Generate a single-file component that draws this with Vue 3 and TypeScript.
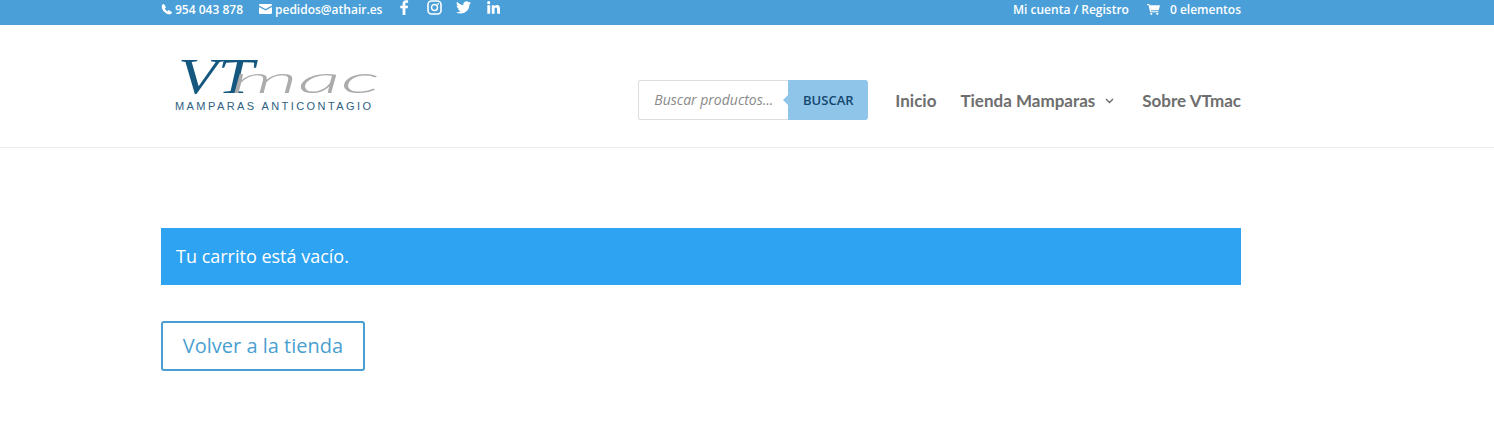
<script setup lang="ts">
const navItems: { label: string; hasMenu: boolean }[] = [
  { label: 'Inicio', hasMenu: false },
  { label: 'Tienda Mamparas', hasMenu: true },
  { label: 'Sobre VTmac', hasMenu: false },
]
</script>

<template>
  <div class="page">
    <div class="topbar">
      <div class="wrap topbar-inner">
        <div class="top-left">
          <span class="contact phone">
            <svg width="12" height="12" viewBox="0 0 24 24"><path fill="#fff" d="M6.200 2.500 9.600 8c.3.500.2 1.100-.2 1.500L7.600 11.200c1 2.200 3 4.300 5.200 5.300l1.700-1.800c.4-.4 1-.5 1.500-.2l5.500 3.400c.5.300.6.900.3 1.400-1 1.800-2.600 3.200-4.600 3.200C9.700 22.500 1.500 14.300 1.500 6.800c0-2 1.400-3.600 3.200-4.600.5-.3 1.200-.2 1.500.3z"/></svg>
            954 043 878
          </span>
          <span class="contact mail">
            <svg width="13" height="10" viewBox="0 0 13 10"><path fill="#fff" d="M0 1a1 1 0 0 1 1-1h11a1 1 0 0 1 1 1v.6L6.500 5 0 1.600z"/><path fill="#fff" d="M0 3l6.500 3.400L13 3v6a1 1 0 0 1-1 1H1a1 1 0 0 1-1-1z"/></svg>
            pedidos@athair.es
          </span>
          <span class="socials">
            <svg class="soc-f" width="9" height="15" viewBox="0 0 9 15"><path fill="#fff" d="M2.600 15V8.300H.3V5.700h2.300V3.800C2.600 1.500 4 .2 6 .2c1 0 1.800.1 2.100.1v2.400H6.700c-1.100 0-1.300.5-1.300 1.300v1.700h2.700l-.4 2.600H5.400V15z"/></svg>
            <svg class="soc-i" width="15" height="15" viewBox="0 0 15 15"><rect x="1" y="1" width="13" height="13" rx="3.500" fill="none" stroke="#fff" stroke-width="1.600"/><circle cx="7.500" cy="7.500" r="3" fill="none" stroke="#fff" stroke-width="1.500"/><circle cx="11.200" cy="3.800" r=".9" fill="#fff"/></svg>
            <svg class="soc-t" width="15" height="13" viewBox="0 0 24 20"><path fill="#fff" d="M24 2.400c-.9.400-1.800.7-2.800.8 1-.6 1.800-1.600 2.200-2.700-1 .6-2 1-3.100 1.200A4.900 4.900 0 0 0 11.900 6.200C7.800 6 4.200 4 1.700.9c-1.300 2.300-.6 5.100 1.500 6.600-.8 0-1.600-.2-2.200-.6 0 2.300 1.600 4.500 4 5-.7.200-1.500.2-2.200.1.600 2 2.400 3.400 4.600 3.400A9.900 9.900 0 0 1 0 17.400 14 14 0 0 0 7.500 19.600c9.100 0 14.300-7.700 14-14.600 1-.7 1.800-1.600 2.500-2.600z"/></svg>
            <svg class="soc-l" width="13" height="13" viewBox="0 0 13 13"><rect x=".3" y="4.200" width="2.900" height="8.500" fill="#fff"/><circle cx="1.700" cy="1.700" r="1.600" fill="#fff"/><path fill="#fff" d="M4.800 4.200h2.700v1.200c.5-.8 1.400-1.400 2.600-1.400 2.200 0 2.900 1.400 2.900 3.700v5H10.100V8.300c0-1-.2-1.900-1.200-1.900-1.100 0-1.300.9-1.300 1.900v4.400H4.800z"/></svg>
          </span>
        </div>
        <div class="top-right">
          <span class="account">Mi cuenta / Registro</span>
          <span class="cart">
            <svg width="13" height="11" viewBox="0 0 13 11"><path fill="#fff" d="M0 0h2.200l.4 1.300H13l-1.300 5H3.900l.3 1h7.300v1H3.200L1.400 1H0z"/><circle cx="4.300" cy="9.800" r="1.100" fill="#fff"/><circle cx="10.300" cy="9.800" r="1.100" fill="#fff"/></svg>
            <span class="cart-label">0 elementos</span>
          </span>
        </div>
      </div>
    </div>

    <header class="header">
      <div class="wrap header-inner">
        <svg class="logo" width="222" height="84" viewBox="0 0 222 84" role="img" aria-label="VTmac">
          <text x="17" y="49" class="logo-vt" textLength="76" lengthAdjust="spacingAndGlyphs">VT</text>
          <text x="70" y="49" class="logo-mac" textLength="149" lengthAdjust="spacingAndGlyphs">mac</text>
          <text x="14" y="66" class="logo-sub" textLength="196" lengthAdjust="spacing">MAMPARAS ANTICONTAGIO</text>
        </svg>
        <div class="header-right">
          <form class="search" @submit.prevent>
            <span class="search-input">Buscar productos...</span>
            <span class="search-btn">BUSCAR</span>
          </form>
          <nav class="nav">
            <a v-for="item in navItems" :key="item.label" class="nav-item">
              {{ item.label }}
              <svg v-if="item.hasMenu" class="chev" width="9" height="6" viewBox="0 0 9 6"><path d="M1 1l3.500 3.500L8 1" fill="none" stroke="#666" stroke-width="1.300"/></svg>
            </a>
          </nav>
        </div>
      </div>
    </header>

    <main class="wrap main">
      <div class="notice">Tu carrito está vacío.</div>
      <a class="back">Volver a la tienda</a>
    </main>
  </div>
</template>

<style>
html, body { margin: 0; background: #fff; }
</style>

<style scoped>
.page {
  height: 447px;
  overflow: hidden;
  font-family: "Open Sans", sans-serif;
  background: #fff;
}
.wrap {
  width: 1080px;
  margin-left: 161px;
}
.topbar {
  height: 25px;
  background: #4a9fd8;
  color: #fff;
  font-size: 12px;
  font-weight: 600;
}
.topbar-inner {
  height: 18px;
  display: flex;
  justify-content: space-between;
  align-items: center;
}
.top-left, .top-right { display: flex; align-items: center; }
.contact { display: inline-flex; align-items: center; white-space: nowrap; }
.phone { gap: 2px; }
.mail { gap: 3px; margin-left: 16px; }
.socials {
  display: inline-flex;
  align-items: center;
  margin-left: 18px;
  margin-top: -3px;
}
.soc-i { margin-left: 18px; }
.soc-t { margin-left: 14px; }
.soc-l { margin-left: 16px; }
.account { margin-left: 1px; }
.cart { display: inline-flex; align-items: center; margin-left: 18px; }
.cart-label { margin-left: 10px; }

.header {
  height: 122px;
  border-bottom: 1px solid #ececec;
  box-sizing: content-box;
}
.header-inner {
  height: 122px;
  display: flex;
  justify-content: space-between;
  align-items: center;
}
.logo { display: block; }
.logo-vt {
  font-family: "Liberation Serif", serif;
  font-style: italic;
  font-size: 50px;
  fill: #14577f;
}
.logo-mac {
  font-family: Lato, sans-serif;
  font-style: italic;
  font-weight: 300;
  font-size: 38px;
  fill: #acacac;
}
.logo-sub {
  font-family: "Liberation Sans", sans-serif;
  font-size: 11px;
  fill: #2d6080;
}
.header-right {
  display: flex;
  align-items: center;
  padding-top: 28px;
}
.search {
  display: flex;
  width: 230px;
  height: 40px;
  margin: 0 27px 0 0;
}
.search-input {
  flex: 1;
  box-sizing: border-box;
  border: 1px solid #ddd;
  border-right: 0;
  border-radius: 3px 0 0 3px;
  padding-left: 15px;
  line-height: 38px;
  font-size: 14px;
  font-style: italic;
  color: #8a8a8a;
  white-space: nowrap;
}
.search-btn {
  position: relative;
  width: 80px;
  background: #8fc5e8;
  border-radius: 0 3px 3px 0;
  text-align: center;
  line-height: 40px;
  font-size: 13px;
  font-weight: 600;
  color: #14476e;
}
.search-btn::before {
  content: "";
  position: absolute;
  left: -5px;
  top: 15px;
  border-top: 5px solid transparent;
  border-bottom: 5px solid transparent;
  border-right: 5px solid #8fc5e8;
}
.nav {
  display: flex;
  align-items: center;
  gap: 24px;
}
.nav-item {
  display: inline-flex;
  align-items: center;
  font-family: Lato, sans-serif;
  font-size: 17px;
  font-weight: 700;
  color: #6e6e6e;
  white-space: nowrap;
}
.nav-item:last-child { margin-left: 4px; }
.chev { margin-left: 10px; margin-top: 2px; }

.main { padding-top: 80px; }
.notice {
  height: 57px;
  box-sizing: border-box;
  background: #2ea3f2;
  color: #fff;
  font-size: 18px;
  line-height: 57px;
  padding-left: 15px;
}
.back {
  display: inline-block;
  box-sizing: border-box;
  width: 204px;
  height: 50px;
  margin-top: 36px;
  border: 2px solid #4a9fd0;
  border-radius: 3px;
  text-align: center;
  font-size: 20px;
  line-height: 45px;
  color: #4a9fd0;
}
</style>
